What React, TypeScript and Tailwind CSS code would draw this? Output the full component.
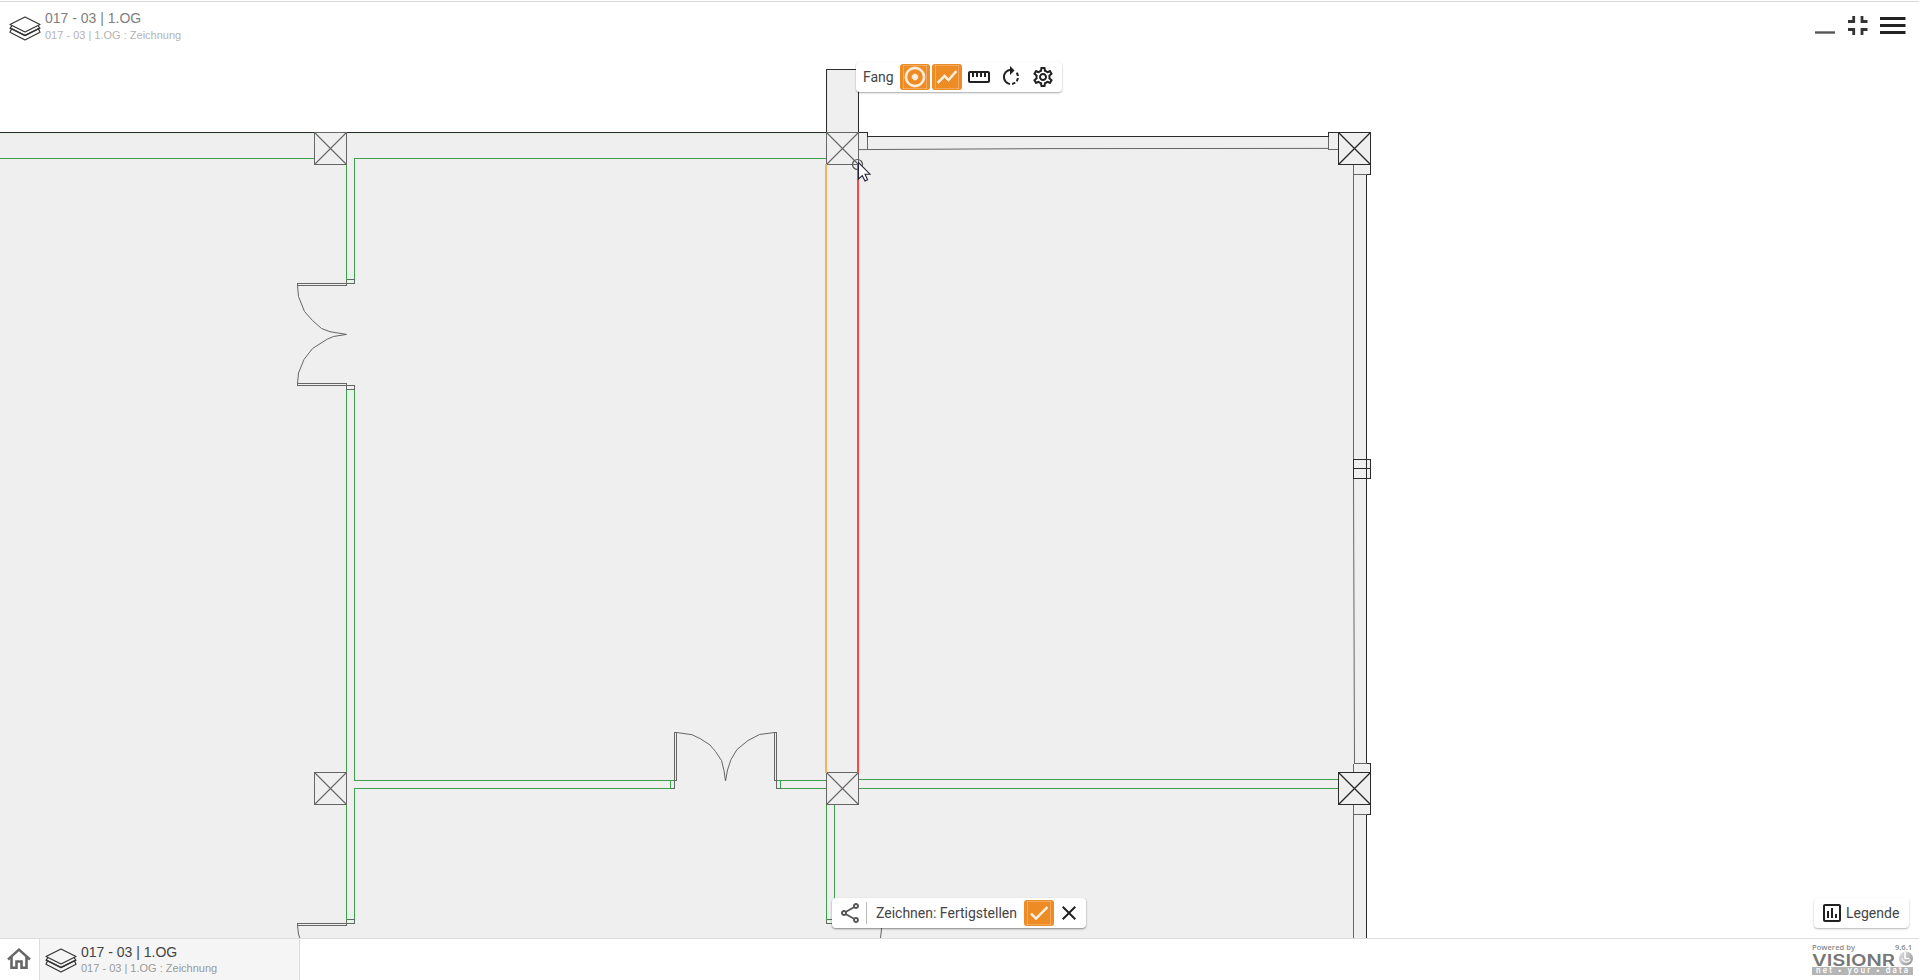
import type { ReactNode } from "react";
import {
  MdAdjust,
  MdCheck,
  MdClose,
  MdOutlineAssessment,
  MdOutlineSettings,
  MdOutlineShare,
  MdRotateRight,
  MdShowChart,
  MdStraighten,
} from "react-icons/md";

const GREEN = "#3f9f4c";
const DARK = "#2b2b2b";
const GREY = "#666";

function LayersIcon() {
  return (
    <svg width="32" height="26" viewBox="0 0 32 26" fill="none" stroke="#333" strokeWidth="1.2" strokeLinejoin="round">
      <path d="M16 1 L31 8.5 L16 16 L1 8.5 Z" />
      <path d="M3 9.5 L1 12.3 L16 19.6 L31 12.3 L29 9.5" />
      <path d="M2.5 13 L1 16.2 L16 24 L31 16.2 L29.5 13" />
      <path d="M2 12.2 L16 19.4 L30 12.2" />
    </svg>
  );
}

function Titles({ strong = false }: { strong?: boolean }) {
  return (
    <div className="flex flex-col whitespace-nowrap">
      <span className={strong ? "text-[14px] leading-[17px] text-[#444]" : "text-[14px] leading-[17px] text-[#808080]"}>
        017 - 03 | 1.OG
      </span>
      <span className={strong ? "text-[11px] leading-[15px] text-[#999]" : "text-[11px] leading-[17px] text-[#b3b3b3]"}>
        017 - 03 | 1.OG : Zeichnung
      </span>
    </div>
  );
}

function ToolButton({ active = false, children }: { active?: boolean; children: ReactNode }) {
  return (
    <button
      className={
        active
          ? "flex h-[26px] w-[30px] items-center justify-center rounded-[3px] bg-[#ed8b24] text-2xl text-[#fdf0e2] [&>svg]:stroke-[0.6]"
          : "flex h-[26px] w-[30px] items-center justify-center rounded-[3px] text-2xl text-[#212121]"
      }
    >
      {children}
    </button>
  );
}

function Column({ x, y, color = GREY }: { x: number; y: number; color?: string }) {
  return (
    <g stroke={color} fill="#efefef">
      <rect x={x} y={y} width="32" height="32" />
      <path d={`M${x} ${y}l32 32M${x + 32} ${y}l-32 32`} shapeRendering="auto" strokeWidth={color === DARK ? 1.4 : 1.1} />
    </g>
  );
}

function FloorPlan() {
  return (
    <svg className="block" width="1919" height="882" viewBox="0 56 1919 882" fill="none" shapeRendering="crispEdges">
      <path
        fill="#efefef"
        d="M0 132.5H826.5V69.5H858.5V132.5H867.5V136.5H1328.5V132.5H1370.5V174.5H1366.5V459.5H1370.5V478.5H1366.5V763.5H1370.5V814.5H1366.5V938H0Z"
      />
      <g fill="#e3f5e6">
        <path d="M346.5 272h8v11h-8zM346.5 389h8v9h-8zM346.5 912h8v11h-8zM670.5 780.5h4v8h-4zM776.5 780.5h4v8h-4zM826.5 912h8v11h-8z" />
      </g>
      <path stroke="#e0f0e0" d="M0 133.5H826M827.5 70.5V132M857.5 70.5V132" />
      <path stroke={DARK} d="M0 132.5H826.5V69.5H858.5V132.5H867.5V136.5H1328.5V132.5H1338.5" />
      <g stroke={GREEN}>
        <path d="M0 158.5H314.5M346.5 164.5V283.5M354.5 283.5V158.5H826.5" />
        <path d="M346.5 385.5V923.5M354.5 385.5V780.5H674.5M354.5 923.5V788.5H674.5" />
        <path d="M670.5 780.5v8M780.5 780.5v8M776.5 780.5H826.5M776.5 788.5H826.5" />
        <path d="M858.5 779.5H1338.5M858.5 788.5H1338.5M826.5 804.5V923.5M834.5 804.5V923.5" />
      </g>
      <g stroke={GREY}>
        <path d="M346.5 279.5h8M346.5 283.5h8M346.5 385.5h8M346.5 389.5h8M354.5 279.5v4M354.5 385.5v4" />
        <path d="M354.5 283.5H297.5V285.5H346.5V279.5M346.5 389.5V383.5H297.5V385.5H354.5" />
        <path d="M674.5 788.5V732.5H676.5V780.5H674.5M776.5 788.5V732.5H774.5V780.5H776.5M670.5 788.5h4M776.5 788.5h4" />
        <path d="M346.5 919.5h8v4H297.5v2H346.5V919.5M826.5 919.5h8v4h-8v-4" />
        <path d="M867.5 136.5V149.5M1328.5 136.5V149.5H1338.5" />
        <path d="M1353.5 164.5V459.5M1353.5 804.5V938M1353.5 174.5H1370.5M1353.5 763.5V772.5" />
      </g>
      <g stroke={GREY} shapeRendering="auto">
        <path d="M297.5 285.5L298.5 296.5L304.5 311.5L312.5 320.5L321.5 328.5L330 331.7L346.5 334.4" />
        <path d="M297.5 383.5L298.5 373L304 359.5L312.5 348.5L327.5 339L333.5 336.5L346.5 334.4" />
        <path d="M676.5 732.5L692 734.7L700.5 738.8L710 745L715.5 751.5L721.5 760.5L724 770.5L725.5 781L727.5 770L731 759.5L737 749.5L748 740.5L759.5 734.5L774.5 732.5" />
        <path d="M297.5 925.5L298.5 934L299.8 938M881.5 923V929L880.5 938" />
        <path d="M858.5 149.6L1050 148.6L1328.5 148.4M1353.5 478.5L1354.5 763.5" />
      </g>
      <g stroke={DARK}>
        <path d="M1366.5 174.5V459.5M1366.5 478.5V763.5M1366.5 814.5V938M1370.5 164.5V174.5H1366.5" />
        <path d="M1353.5 459.5H1370.5V478.5H1353.5ZM1353.5 468.5H1370.5M1366.5 459.5V478.5" />
        <path d="M1366.5 763.5H1370.5V814.5H1366.5" />
        <path d="M1353.5 763.5H1366.5M1353.5 814.5H1366.5" stroke={GREY} />
      </g>
      <Column x={314.5} y={132.5} />
      <Column x={826.5} y={132.5} />
      <Column x={314.5} y={772.5} />
      <Column x={826.5} y={772.5} />
      <Column x={1338.5} y={132.5} color={DARK} />
      <Column x={1338.5} y={772.5} color={DARK} />
      <path d="M826 164V773" stroke="#f5b060" strokeWidth="2" />
      <path d="M858 164V773" stroke="#ff4545" strokeWidth="2" />
      <circle cx="857.5" cy="164.5" r="5" stroke="#555" strokeWidth="1.2" shapeRendering="auto" />
      <path
        d="M858.5 162.5V179L862.3 175.7L865 181L867.6 179.8L865 174.2H870Z"
        fill="#fff"
        stroke="#222238"
        strokeWidth="1.1"
        shapeRendering="auto"
      />
    </svg>
  );
}

function VisionrLogo() {
  return (
    <svg width="102" height="36" viewBox="0 0 102 36" fontFamily="Inter, 'Liberation Sans', sans-serif">
      <defs>
        <linearGradient id="metal" x1="0" y1="0" x2="1" y2="1">
          <stop offset="0" stopColor="#e4e4e4" />
          <stop offset="0.5" stopColor="#bdbdbd" />
          <stop offset="1" stopColor="#8a8a8a" />
        </linearGradient>
      </defs>
      <g fontFamily="'Open Sans', 'Liberation Sans', sans-serif" fontSize="7.5" fontWeight="600" fill="#8a8a8a">
        <text x="0" y="9.5" textLength="43">Powered by</text>
        <text x="83" y="9.5" textLength="17">9.6.1</text>
      </g>
      <text x="0" y="25.5" fontSize="16.5" fontWeight="600" fill="#777" textLength="83" lengthAdjust="spacingAndGlyphs">VISIONR</text>
      <circle cx="94" cy="18.5" r="7" fill="url(#metal)" />
      <path d="M93 12v6.5h4.5" fill="none" stroke="#fff" strokeWidth="1.6" />
      <path d="M90 18a4.5 4.5 0 0 0 8.5 1.5" fill="none" stroke="#f3f3f3" strokeWidth="1.5" />
      <rect x="0" y="27" width="101" height="8" fill="#b5b5b5" />
      <text x="4" y="33.3" fontSize="7.5" fontWeight="600" fill="#fff" textLength="92">net • your • data</text>
    </svg>
  );
}

export default function App() {
  return (
    <div className="relative flex h-[980px] w-[1919px] flex-col overflow-hidden bg-white font-['Liberation_Sans',Arial,sans-serif]">
      <header className="flex h-14 shrink-0 items-start justify-between border-t border-[#d9dcdc] mt-px -mb-px pl-[9px] pr-[13px]">
        <div className="flex gap-1 pt-2">
          <div className="pt-[6px]">
            <LayersIcon />
          </div>
          <Titles />
        </div>
        <svg width="92" height="24" viewBox="0 0 92 24" className="mt-3" fill="none" stroke="#333">
          <path d="M1 18.5H21" stroke="#555" strokeWidth="2.4" />
          <path d="M34 7.5H39.7V2M53.5 7.5H48V2M34 15.5H39.7V21M53.5 15.5H48V21" strokeWidth="2.8" />
          <path d="M66 4.5H91.5M66 11.5H91.5M66 18.5H91.5" stroke="#222" strokeWidth="2.8" />
        </svg>
      </header>

      <main className="h-[882px] shrink-0">
        <FloorPlan />
      </main>

      <footer className="flex h-[42px] shrink-0 border-t border-[#ddd] bg-white">
        <div className="flex w-[39px] items-start pl-[7px] pt-2">
          <svg width="24" height="24" viewBox="0 0 24 24" fill="none" stroke="#666" strokeWidth="2.6">
            <path d="M1 12.5L12 2.5L23 12.5" strokeWidth="2.4" />
            <path d="M4.5 10V20.7H9.5V14.5H14.5V20.7H19.5V10" />
          </svg>
        </div>
        <div className="flex w-[261px] gap-1 border-x border-[#ddd] bg-[#f5f5f5] pl-[5px] pt-[5px]">
          <div className="pt-1">
            <LayersIcon />
          </div>
          <Titles strong />
        </div>
        <div className="ml-auto pr-[5px] pt-px">
          <VisionrLogo />
        </div>
      </footer>

      <div className="absolute left-[856px] top-[62px] flex h-[30px] w-[206px] items-center gap-[2px] rounded bg-white pl-[7px] shadow-[0_1px_2px_rgba(0,0,0,0.35)]">
        <span className="w-[35px] font-[Roboto,sans-serif] text-[14px] text-[#444]">Fang</span>
        <ToolButton active><MdAdjust /></ToolButton>
        <ToolButton active><MdShowChart /></ToolButton>
        <ToolButton><MdStraighten /></ToolButton>
        <ToolButton><MdRotateRight /></ToolButton>
        <ToolButton><MdOutlineSettings /></ToolButton>
      </div>

      <div className="absolute left-[832px] top-[898px] flex h-[30px] w-[254px] items-center rounded bg-white pl-[6px] shadow-[0_1px_2px_rgba(0,0,0,0.45)]">
        <MdOutlineShare className="size-6 text-[#555]" />
        <div className="ml-1 h-[22px] w-px bg-[#bbb]" />
        <span className="ml-[9px] w-[148px] whitespace-nowrap font-[Roboto,sans-serif] text-[14px] text-[#444]">
          Zeichnen: Fertigstellen
        </span>
        <ToolButton active><MdCheck /></ToolButton>
        <ToolButton><MdClose /></ToolButton>
      </div>

      <div className="absolute left-[1814px] top-[898px] flex h-[30px] w-[95px] items-center gap-[2px] rounded bg-white pl-[6px] shadow-[0_1px_2px_rgba(0,0,0,0.3)]">
        <MdOutlineAssessment className="size-6 text-[#212121]" />
        <span className="font-[Roboto,sans-serif] text-[14px] text-[#444]">Legende</span>
      </div>
    </div>
  );
}
